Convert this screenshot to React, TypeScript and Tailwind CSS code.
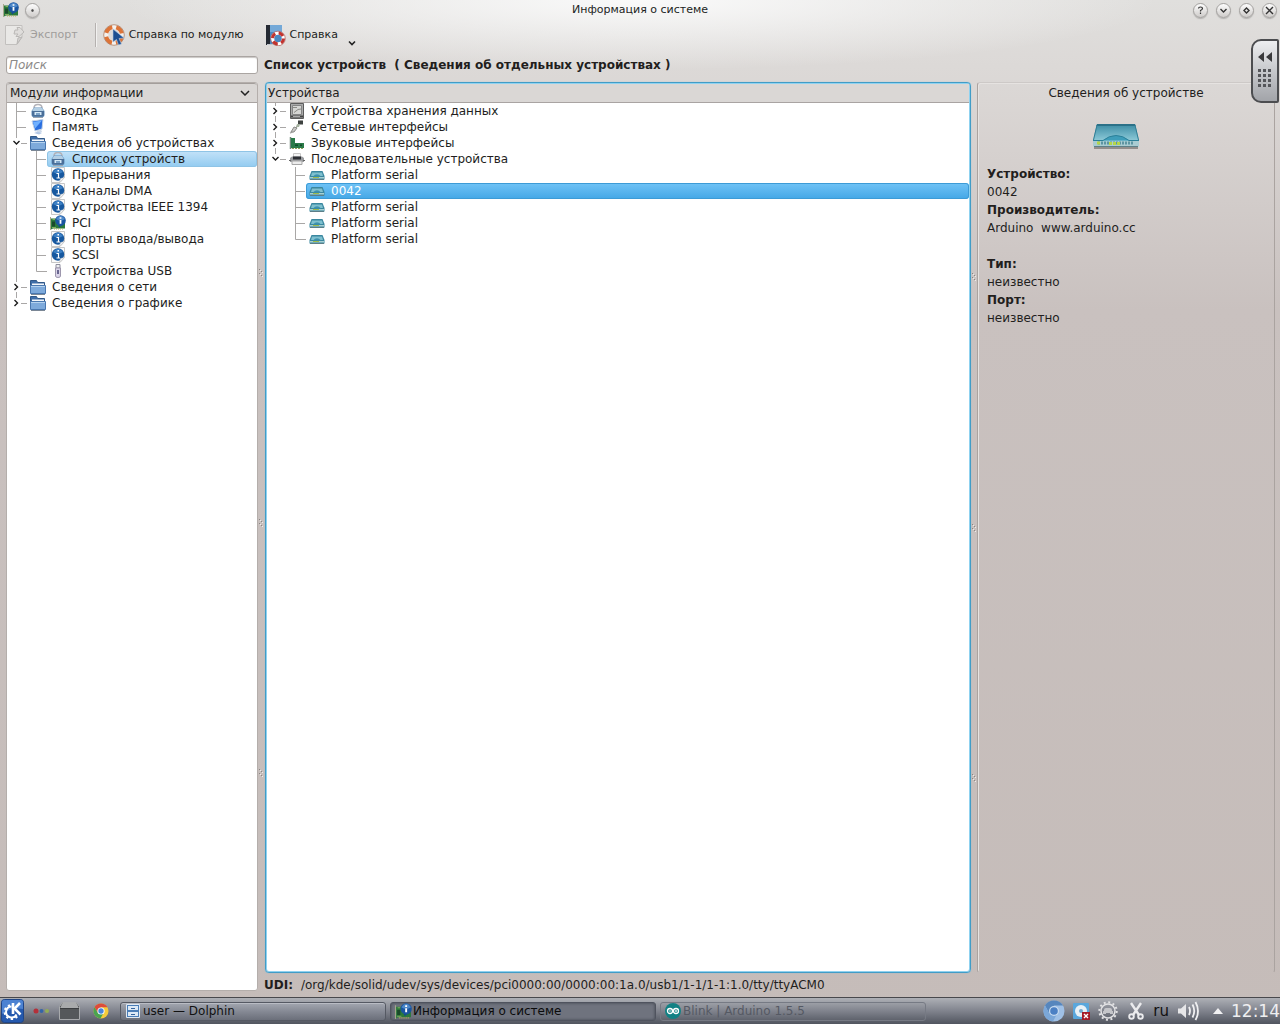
import type { ReactNode } from 'react';

type IconName =
  | 'drive' | 'monitor' | 'folder' | 'info' | 'pci' | 'usb'
  | 'disk' | 'network' | 'card' | 'printer' | 'modem';

type Row = { guides: string; icon: IconName; label: string; selected?: boolean };

/* guide letters: | line, t tee, l corner, c closed, e closed at the end,
   o open (line continues), p open at the end, _ blank */
const modules: Row[] = [
  { guides: 't', icon: 'drive', label: 'Сводка' },
  { guides: 't', icon: 'monitor', label: 'Память' },
  { guides: 'o', icon: 'folder', label: 'Сведения об устройствах' },
  { guides: '|t', icon: 'drive', label: 'Список устройств', selected: true },
  { guides: '|t', icon: 'info', label: 'Прерывания' },
  { guides: '|t', icon: 'info', label: 'Каналы DMA' },
  { guides: '|t', icon: 'info', label: 'Устройства IEEE 1394' },
  { guides: '|t', icon: 'pci', label: 'PCI' },
  { guides: '|t', icon: 'info', label: 'Порты ввода/вывода' },
  { guides: '|t', icon: 'info', label: 'SCSI' },
  { guides: '|l', icon: 'usb', label: 'Устройства USB' },
  { guides: 'c', icon: 'folder', label: 'Сведения о сети' },
  { guides: 'e', icon: 'folder', label: 'Сведения о графике' },
];

const devices: Row[] = [
  { guides: 'c', icon: 'disk', label: 'Устройства хранения данных' },
  { guides: 'c', icon: 'network', label: 'Сетевые интерфейсы' },
  { guides: 'c', icon: 'card', label: 'Звуковые интерфейсы' },
  { guides: 'p', icon: 'printer', label: 'Последовательные устройства' },
  { guides: '_t', icon: 'modem', label: 'Platform serial' },
  { guides: '_t', icon: 'modem', label: '0042', selected: true },
  { guides: '_t', icon: 'modem', label: 'Platform serial' },
  { guides: '_t', icon: 'modem', label: 'Platform serial' },
  { guides: '_l', icon: 'modem', label: 'Platform serial' },
];

const guidePaths: Record<string, string> = {
  '|': 'M9.5 0V16',
  t: 'M9.5 0V16M9.5 8.5H19',
  l: 'M9.5 0V8.5H20',
  c: 'M9.5 0V3M9.5 13V16M14 8.5H20',
  e: 'M9.5 0V3M14 8.5H20',
  o: 'M9.5 0V3M9.5 13V16M14 8.5H20',
  p: 'M9.5 0V3M14 8.5H20',
  _: '',
};

function Guide({ kind }: { kind: string }) {
  const closed = kind === 'c' || kind === 'e';
  const open = kind === 'o' || kind === 'p';
  return (
    <svg className="h-4 w-5 shrink-0" viewBox="0 0 20 16" fill="none" aria-hidden="true">
      <path d={guidePaths[kind]} stroke="#a9a7a6" />
      {closed && <path d="M7.5 5L10.5 8L7.5 11" stroke="#1c1c1c" strokeWidth="1.4" />}
      {open && <path d="M6.5 6L9.5 9L12.5 6" stroke="#1c1c1c" strokeWidth="1.4" />}
    </svg>
  );
}

function Svg({ children, className = 'size-4' }: { children: ReactNode; className?: string }) {
  return (
    <svg className={`${className} shrink-0`} viewBox="0 0 16 16" fill="none" aria-hidden="true">
      {children}
    </svg>
  );
}

function PciArt() {
  return (
    <>
      <path d="M1 3.500H15V13.500H3L1 14.500Z" fill="#2b7a3c" />
      <path d="M.5 2V15" stroke="#a5a88c" />
      <path d="M2 6.500H5V11.500H2Z" fill="#1a4a2a" />
      <path d="M2.500 4.500H5M2 12.500H6" stroke="#7fae5c" />
      <path d="M4 14H13" stroke="#b9ad55" strokeDasharray="1 1" />
      <path d="M8 9L9 12.500L13 9.500Z" fill="#164a8a" />
      <circle cx="10.500" cy="5.500" r="5.300" fill="#1a55a0" />
      <path d="M6 4Q10.500 -2.500 15 4Q10.500 7 6 4" fill="#4d88c9" />
      <path d="M10.500 5V8.800M10.500 2.200V3.800" stroke="#fff" strokeWidth="1.800" />
    </>
  );
}

function Icon({ name }: { name: IconName }) {
  switch (name) {
    case 'drive':
      return (
        <Svg>
          <path d="M4 5Q4 1.500 8 1.500T12 5" stroke="#b3b2b8" strokeWidth="1.500" />
          <path d="M4 4.500H12L14.500 8V12Q14.500 14 12.500 14H3.500Q1.500 14 1.500 12V8Z" fill="#6392bf" />
          <path d="M4 5H12L13.800 8H2.200Z" fill="#b4cfe4" />
          <path d="M2 8H14V12Q14 13.500 12.500 13.500H3.500Q2 13.500 2 12Z" fill="#4a6f99" />
          <path d="M4.500 9H11.500V12H4.500Z" fill="#d5e9f6" />
          <path d="M6 10H10V12H6Z" fill="#7ca3c8" />
          <path d="M3 14.500H13" stroke="#99a4b0" />
        </Svg>
      );
    case 'monitor':
      return (
        <Svg>
          <path d="M2 2L13 .5L12 10L5 12Z" fill="#2a6fe0" stroke="#c5d3e6" />
          <path d="M3 3L12 1.500L5 9.500Z" fill="#6fb0ff" />
          <path d="M7 11.500L11 10.500L12 13L6 14Z" fill="#cdd9e8" />
          <path d="M4 14Q8 12 12 14L9 15.500Z" fill="#b3c7e4" />
        </Svg>
      );
    case 'folder':
      return (
        <Svg>
          <path d="M.5 1.500H6.500L7.500 3.500H14.500V7H.5Z" fill="#3f6ea8" stroke="#315888" />
          <path d="M2 4.500H14V7H2Z" fill="#f4f7fa" />
          <path d="M.5 6.500H15.500V14.500H.5Z" fill="#7eaadb" stroke="#4a78b0" />
          <path d="M1 7.500H15" stroke="#b4d2ef" />
          <path d="M1 15.500H15" stroke="#7b8795" />
        </Svg>
      );
    case 'info':
      return (
        <Svg>
          <path d="M1.500 .5H14.500V10.500L10 15.500H1.500Z" fill="#fbfbfb" stroke="#c7c7c7" />
          <circle cx="8" cy="7.500" r="6.200" fill="#17589f" />
          <path d="M3 5Q8 -2 13 5Q8 8 3 5" fill="#3d80c4" />
          <path d="M6.500 6.500H8.500V11M6.500 11H10" stroke="#fff" strokeWidth="1.200" />
          <path d="M7.500 3H9V4.500H7.500Z" fill="#fff" />
          <path d="M9.500 15.300L10.500 11.500L14.300 10.500Z" fill="#fff" stroke="#bbb" strokeWidth=".5" />
        </Svg>
      );
    case 'pci':
      return <Svg><PciArt /></Svg>;
    case 'usb':
      return (
        <Svg>
          <path d="M6 1.500H10V5H6Z" fill="#eeeef2" stroke="#8e8e9e" />
          <path d="M5.500 5H10.500V13Q10.500 14.500 8 14.500T5.500 13Z" fill="#d9d3e8" stroke="#9d97ad" />
          <path d="M7 7H9V11H7Z" fill="#6a6790" />
        </Svg>
      );
    case 'disk':
      return (
        <Svg>
          <path d="M1.500 .5H14.500V15.500H1.500Z" fill="#aaa" stroke="#5c5c5c" />
          <path d="M3.500 2.500H12.500V11.500H3.500Z" fill="#d6d6d4" stroke="#858585" />
          <path d="M4 4.500H8M5 9.500L9 6.500L12 6" stroke="#8b8b86" />
          <path d="M2 13.500H14" stroke="#444" strokeWidth="2" />
          <path d="M4 13.500H11" stroke="#aaa" />
        </Svg>
      );
    case 'network':
      return (
        <Svg>
          <path d="M1 14Q5 13 9 6" stroke="#b2b2b0" strokeWidth="1.500" />
          <path d="M2 13L5 8L8 9L5 13Z" fill="#c9c9c6" stroke="#8b8b89" />
          <path d="M9 1.500H14V5.500H9Z" fill="#3e4240" />
          <path d="M8 5L7 8L10 8L11 5.500Z" fill="#a4b19e" />
          <path d="M9.500 1.500H13" stroke="#999" />
        </Svg>
      );
    case 'card':
      return (
        <Svg>
          <path d="M1.500 2V14" stroke="#71877a" strokeWidth="1.500" />
          <path d="M2 3H6V8H15V13H2Z" fill="#2a7a48" />
          <path d="M6 9.500H9V11H6ZM11 9.500H13V11H11Z" fill="#124b28" />
          <path d="M3 13.500H14" stroke="#8f9f57" strokeDasharray="2 1" />
        </Svg>
      );
    case 'printer':
      return (
        <Svg>
          <path d="M4.500 2.500H11.500V7H4.500Z" fill="#f4f4f4" stroke="#c6c6c6" />
          <path d="M1 7L3 5.500H13L15 7V11H1Z" fill="#9a9c9f" />
          <path d="M4 5.500H12V8.500H4Z" fill="#2c2f34" />
          <path d="M3 10H13V13.500H3Z" fill="#ececec" stroke="#a6a6a6" />
          <path d="M0 9.500H2M14 9.500H16" stroke="#636363" />
        </Svg>
      );
    case 'modem':
      return (
        <Svg>
          <path d="M2.500 4H13.500L15.500 9V12.500H.5V9Z" fill="#3a879f" />
          <path d="M3 5.500H13L14 9H2Z" fill="#7fc0cf" />
          <path d="M4 9.500Q8 5 12 9.500Z" fill="#3d91ae" />
          <path d="M1 10H15V11.500H1Z" fill="#a8cfd2" />
          <path d="M4 10.500H10" stroke="#9fbb4c" />
          <path d="M1 12.500H15" stroke="#5c7e88" />
        </Svg>
      );
  }
}

function Tree({ rows, label, strong }: { rows: Row[]; label: string; strong?: boolean }) {
  return (
    <ul aria-label={label}>
      {rows.map((row, i) => {
        const look = !row.selected
          ? ''
          : strong
            ? 'rounded-[3px] bg-linear-to-b from-[#70c3f6] to-[#43a7e6] text-white outline -outline-offset-1 outline-[#3d9bd6]'
            : 'rounded-[3px] bg-linear-to-b from-[#c3e2f8] to-[#92cbf0] outline -outline-offset-1 outline-[#8fc4e6]';
        return (
          <li key={i} className="flex h-4">
            {row.guides.split('').map((g, j) => <Guide key={j} kind={g} />)}
            <button type="button" className={`flex h-4 min-w-0 flex-1 items-center gap-1.5 pl-[3px] text-left whitespace-nowrap ${look}`}>
              <Icon name={row.icon} />
              {row.label}
            </button>
          </li>
        );
      })}
    </ul>
  );
}

function RoundButton({ label, children }: { label: string; children: ReactNode }) {
  return (
    <button type="button" aria-label={label} className="grid size-[15px] place-items-center rounded-full border border-[#a3a19f] bg-linear-to-b from-[#fdfdfd] to-[#cfccca] shadow-[0_1px_1px_#88868480]">
      <svg className="size-[11px]" viewBox="0 0 11 11" fill="none" stroke="#333" strokeWidth="1.400" aria-hidden="true">{children}</svg>
    </button>
  );
}

function Splitter({ className }: { className: string }) {
  return (
    <div className={`flex w-1.5 shrink-0 flex-col items-center justify-between ${className}`} aria-hidden="true">
      {[0, 1, 2].map((n) => (
        <svg key={n} className="h-2 w-1" viewBox="0 0 4 8">
          <path d="M0 0h1v1H0zM2 2h1v1H2zM0 4h1v1H0zM2 6h1v1H2z" fill="#8c8684" />
          <path d="M1 1h1v1H1zM3 3h1v1H3zM1 5h1v1H1zM3 7h1v1H3z" fill="#eeeae8" />
        </svg>
      ))}
    </div>
  );
}

function BigModem() {
  return (
    <svg className="h-[27px] w-12" viewBox="0 0 48 27" fill="none" aria-hidden="true">
      <defs>
        <linearGradient id="top" x1="0" y1="0" x2="0" y2="1">
          <stop stopColor="#3a8ba3" /><stop offset=".6" stopColor="#7fbfcf" /><stop offset="1" stopColor="#b4dce2" />
        </linearGradient>
      </defs>
      <path d="M2 23H46V26H2Z" fill="#66605e" opacity=".6" />
      <path d="M5 1H43L47 17V23Q47 24 46 24H2Q1 24 1 23V17Z" fill="url(#top)" />
      <path d="M5 1H43L43.500 3H4.500Z" fill="#2b7188" />
      <path d="M5 2L1.500 17M43 2L46.500 17" stroke="#317e95" />
      <path d="M11 17.500Q17 12.500 24 12.500T37 17.500Z" fill="#3e9db9" />
      <path d="M1 17.500H11Q17 12.500 24 12.500T37 17.500H47" stroke="#2b8099" />
      <path d="M1 18H47V23H1Z" fill="#a9ccd2" />
      <path d="M6 20H42" stroke="#5d95a2" strokeWidth="3" strokeDasharray="2 1" />
      <path d="M5 20H9M17 20.500H28" stroke="#b5d648" strokeWidth="3" strokeDasharray="3 1" />
      <path d="M2 23.500H46" stroke="#5d8088" />
    </svg>
  );
}

function InfoPair({ name, value }: { name: string; value: string }) {
  return (
    <>
      <dt className="leading-[18px] font-bold">{name}</dt>
      <dd className="leading-[18px] whitespace-pre">{value}</dd>
    </>
  );
}

function Task({ children, look }: { children: ReactNode; look: string }) {
  return (
    <button type="button" className={`flex h-[19px] w-[266px] min-w-0 items-center rounded-[3px] border px-1 text-left text-[12px] whitespace-nowrap ${look}`}>
      {children}
    </button>
  );
}

function Taskbar() {
  return (
    <footer className="flex h-[27px] shrink-0 items-center border-t border-[#48484c] bg-linear-to-b from-[#aeb0b6] via-[#80838d] to-[#51555f]">
      <button type="button" aria-label="Меню">
        <svg className="h-6 w-[25px]" viewBox="0 0 25 24" fill="none" aria-hidden="true">
          <rect x="1.500" y=".5" width="22" height="23" rx="3" fill="#2559ae" stroke="#1f4588" />
          <path d="M2 3Q2 1 4 1H21Q23 1 23 3V10Q12 8 2 15Z" fill="#4c82d2" />
          <path d="M11.500 7.500A5.500 5.500 0 1 0 16.500 15.500" stroke="#fff" strokeWidth="2" />
          <path d="M10 6.200A7 7 0 1 0 18 16" stroke="#fff" strokeWidth="2.200" strokeDasharray="2.200 2.600" />
          <path d="M13 4V15" stroke="#fff" strokeWidth="2.600" />
          <path d="M20 4L14.500 9.500L20.500 15.500" stroke="#fff" strokeWidth="2.600" />
        </svg>
      </button>
      <svg className="ml-2 h-2 w-4" viewBox="0 0 16 8" aria-hidden="true">
        <circle cx="3" cy="4" r="2.500" fill="#b3303a" /><circle cx="8.500" cy="4" r="2" fill="#3465a8" /><circle cx="14" cy="4" r="2" fill="#93ad55" />
      </svg>
      <button type="button" aria-label="Рабочий стол" className="ml-[10px]">
        <svg className="h-[18px] w-[21px]" viewBox="0 0 21 18" aria-hidden="true">
          <path d="M3.500 .5H17.500L20.500 4.500V17.500H.5V4.500Z" fill="#55585a" stroke="#a8aaac" />
          <path d="M3.500 1H17.500L20 6.500H1Z" fill="#a9abac" />
          <path d="M1 6.500H20" stroke="#3b3e40" />
        </svg>
      </button>
      <button type="button" aria-label="Chrome" className="ml-3">
        <svg className="size-[18px]" viewBox="0 0 18 18" aria-hidden="true">
          <circle cx="9" cy="9" r="7.500" fill="#f4cb3b" />
          <path d="M2.500 5.200A7.500 7.500 0 0 1 15.500 5.200H9L6 11Z" fill="#dc4b3c" />
          <path d="M2.500 5.200A7.500 7.500 0 0 0 8.500 16.500L11.500 11L6 11Z" fill="#4aa350" />
          <circle cx="9" cy="9" r="3.600" fill="#fff" /><circle cx="9" cy="9" r="2.700" fill="#4a86dc" />
        </svg>
      </button>
      <div className="ml-[10px] flex min-w-0 gap-1">
        <Task look="gap-0.5 border-[#555963] bg-linear-to-b from-[#a3a7b0] via-[#858994] to-[#6b6f7a] text-[#111] shadow-[inset_0_1px_0_#b9bcc4]">
          <Svg>
            <path d="M1.500 1.500H14.500V14.500H1.500Z" fill="#4b7eb8" stroke="#e0e9f2" />
            <path d="M3 3H13V7H3ZM3 9H13V13H3Z" fill="#dce9f6" />
            <path d="M6 5.500H10M6 11.500H10" stroke="#35639c" />
          </Svg>
          user — Dolphin
        </Task>
        <Task look="gap-px border-[#4f535e] bg-[#6f737e] text-[#0b0b0b] shadow-[inset_0_0_3px_#3f434d]">
          <Svg className="size-[17px]"><PciArt /></Svg>
          Информация о системе
        </Task>
        <Task look="gap-0.5 border-[#767a84] bg-transparent text-[#555963]">
          <Svg>
            <circle cx="8" cy="8" r="8" fill="#128184" />
            <circle cx="5" cy="8" r="2.500" stroke="#fff" strokeWidth="1.300" /><circle cx="11" cy="8" r="2.500" stroke="#fff" strokeWidth="1.300" />
            <path d="M4 8H6M10 8H12M11 7V9" stroke="#fff" strokeWidth=".8" />
          </Svg>
          Blink | Arduino 1.5.5
        </Task>
      </div>
      <div className="ml-auto flex shrink-0 items-center">
        <svg className="size-[22px]" viewBox="0 0 22 22" aria-hidden="true">
          <circle cx="11" cy="11" r="10.500" fill="#9fc0e6" />
          <path d="M2 5.500A10.500 10.500 0 0 1 20 5.500H11L6 13Z" fill="#5686bd" />
          <path d="M2 5.500A10.500 10.500 0 0 0 10 21.500L14 14L6 13Z" fill="#7ba7d8" />
          <circle cx="11" cy="11" r="5" fill="#c8dbf0" /><circle cx="11" cy="11" r="3.800" fill="#4b80c4" />
        </svg>
        <svg className="ml-2 size-[17px]" viewBox="0 0 17 17" fill="none" aria-hidden="true">
          <rect width="16" height="16" rx="1" fill="#5aa7dc" />
          <circle cx="8" cy="8" r="6" fill="#e9f1f6" /><circle cx="8" cy="8" r="2" fill="#73aace" />
          <path d="M9 9H17V17H9Z" fill="#a51c27" /><path d="M11 11L15 15M15 11L11 15" stroke="#fff" strokeWidth="1.400" />
        </svg>
        <svg className="ml-2 size-5" viewBox="0 0 20 20" fill="none" aria-hidden="true">
          <circle cx="10" cy="10" r="7" stroke="#e2e2e4" strokeWidth="1.500" />
          <circle cx="10" cy="10" r="8.700" stroke="#e2e2e4" strokeWidth="2" strokeDasharray="2 2.550" />
          <path d="M6 10V9Q6 7 8 7H12Q14 7 14 9V10H15V13H12V12H8V13H5V10Z" fill="#c4c5c9" />
        </svg>
        <svg className="ml-[10px] h-5 w-4" viewBox="0 0 16 20" fill="none" stroke="#ebebed" aria-hidden="true">
          <path d="M3 2L11 14M13 2L5 14" strokeWidth="2.400" />
          <circle cx="3.500" cy="15.500" r="2.300" strokeWidth="1.900" /><circle cx="12.500" cy="15.500" r="2.300" strokeWidth="1.900" />
        </svg>
        <span className="ml-[9px] text-[15px] text-[#111]">ru</span>
        <svg className="ml-2 h-[22px] w-6" viewBox="0 0 24 22" fill="none" stroke="#efeff1" strokeWidth="1.800" aria-hidden="true">
          <path d="M1 8.500H4L9 4V18L4 13.500H1Z" fill="#e6e6e8" stroke="none" />
          <path d="M12 7Q14 11 12 15M15.500 4.500Q19 11 15.500 17.500M18.500 2Q23.500 11 18.500 20" />
        </svg>
        <svg className="ml-3 h-1.5 w-2.5" viewBox="0 0 10 6" aria-hidden="true"><path d="M5 0L10 6H0Z" fill="#f1f1f3" /></svg>
        <time className="ml-2 text-[17px] text-[#eeeef0]">12:14</time>
      </div>
    </footer>
  );
}

export default function App() {
  return (
    <div className="flex h-screen flex-col overflow-hidden bg-[radial-gradient(ellipse_520px_70px_at_50%_0,#fafafa,transparent),linear-gradient(#e0dfdd_0,#dad6d4_100px,#c9c1bf_310px,#c5bcb9_100%)] font-['DejaVu_Sans',sans-serif] text-[12px] leading-4 text-[#221e1d]">
      <header className="grid h-5 shrink-0 grid-cols-[1fr_auto_1fr] items-center px-[3px]">
        <div className="flex items-center gap-1.5">
          <Svg><PciArt /></Svg>
          <RoundButton label="Закрепить"><circle cx="5.500" cy="5.500" r=".5" /></RoundButton>
        </div>
        <h1 className="text-[11px]">Информация о системе</h1>
        <div className="flex justify-end gap-2">
          <RoundButton label="Подсказка"><path strokeWidth="1.200" d="M3.500 3.500Q3.500 2 5.500 2T7.500 3.500Q7.500 4.500 5.500 5.500V6.500M5.500 7.500V9" /></RoundButton>
          <RoundButton label="Свернуть"><path d="M2.500 4L5.500 7L8.500 4" /></RoundButton>
          <RoundButton label="Развернуть"><path d="M5.500 3L8 5.500L5.500 8L3 5.500Z" /></RoundButton>
          <RoundButton label="Закрыть"><path d="M2 2L9 9M9 2L2 9" /></RoundButton>
        </div>
      </header>

      <nav className="flex h-8 shrink-0 items-center pb-0.5 text-[11px]" aria-label="Панель инструментов">
        <button type="button" disabled className="ml-1 flex items-center gap-1 text-[#a09d9b]">
          <svg className="size-[22px]" viewBox="0 0 22 22" fill="none" aria-hidden="true">
            <path d="M1.500 1.500H18V13L13 20.500H1.500Z" fill="#e9e8e6" stroke="#c2c0be" />
            <path d="M13 20L14 14L18 13Z" fill="#d5d3d1" stroke="#b9b7b5" />
            <path d="M11 6H14L13 3.500H16L20 8L15 12.500H12L14 10H10Z" fill="#dfdddb" stroke="#bab8b6" />
          </svg>
          Экспорт
        </button>
        <div className="ml-[17px] h-6 w-px bg-[#b5b1af] shadow-[1px_0_0_#f2f1f0]" />
        <button type="button" className="ml-[7px] flex items-center gap-1">
          <svg className="size-[22px]" viewBox="0 0 22 22" fill="none" aria-hidden="true">
            <circle cx="11" cy="11" r="8" stroke="#f4f1ee" strokeWidth="4.500" />
            <circle cx="11" cy="11" r="8" stroke="#dd7438" strokeWidth="4" strokeDasharray="8.570 4" strokeDashoffset="-2" />
            <circle cx="11" cy="11" r="10.300" stroke="#aa7455" strokeWidth=".7" />
            <path d="M10 5L21 14L16 14.500L18.500 20L15.500 21L13.500 15.500L10 18Z" fill="#1d4f91" stroke="#b7cce6" strokeWidth=".6" />
          </svg>
          Справка по модулю
        </button>
        <button type="button" className="ml-5 flex items-center gap-1">
          <svg className="size-[22px]" viewBox="0 0 22 22" fill="none" aria-hidden="true">
            <path d="M2 1H18V20H2Z" fill="#4b88c1" /><path d="M2 1H6V21H2Z" fill="#252a33" /><path d="M6 1H18V8H6Z" fill="#74a9d8" />
            <path d="M3 20.500H14" stroke="#c3c8cf" />
            <circle cx="14" cy="14.500" r="5.500" stroke="#fff" strokeWidth="3.500" />
            <circle cx="14" cy="14.500" r="5.500" stroke="#c2332e" strokeWidth="3" strokeDasharray="5.140 3.500" />
            <circle cx="14" cy="14.500" r="7.300" stroke="#a6413c" strokeWidth=".6" />
          </svg>
          Справка
          <svg className="mt-4 ml-1.5 h-1.5 w-2" viewBox="0 0 8 6" fill="none" aria-hidden="true"><path d="M1 1.500L4 4.500L7 1.500" stroke="#222" strokeWidth="1.600" /></svg>
        </button>
      </nav>

      <main className="flex min-h-0 flex-1 pr-[5px] pl-1.5">
        <aside className="flex w-[252px] shrink-0 flex-col pb-1.5">
          <input type="text" aria-label="Поиск" placeholder="Поиск" className="mt-1 h-[18px] w-full rounded-[3px] border border-[#aaa5a2] bg-white px-0.5 text-[12px] italic shadow-[inset_0_1px_1px_#c9c6c4] outline-none placeholder:text-[#8c8a89]" />
          <section className="mt-2 flex min-h-0 flex-1 flex-col rounded-[3px] border border-[#b4aeab] bg-white">
            <button type="button" className="flex h-5 shrink-0 items-center justify-between rounded-t-[3px] border-t border-b border-t-[#a39e9b] border-b-[#a9a4a2] bg-[#dad7d5] pr-[7px] pl-[3px]">
              Модули информации
              <svg className="h-1.5 w-2.5" viewBox="0 0 10 6" fill="none" aria-hidden="true"><path d="M1 1L5 5L9 1" stroke="#222" strokeWidth="1.500" /></svg>
            </button>
            <Tree rows={modules} label="Модули информации" />
          </section>
        </aside>
        <Splitter className="pt-[217px] pb-[220px]" />
        <div className="flex min-w-0 flex-1 flex-col">
          <h2 className="mt-1 h-[18px] leading-[18px] font-bold whitespace-pre">Список устройств  ( Сведения об отдельных устройствах )</h2>
          <div className="mt-2 flex min-h-0 flex-1">
            <section className="ml-px flex min-w-0 flex-1 flex-col overflow-hidden rounded-[4px] border border-[#419cc6] bg-white shadow-[inset_0_0_0_1px_#8fd2f0,0_0_1px_#6db6dc]">
              <h3 className="mx-px mt-px h-[19px] shrink-0 border-b border-[#a9a4a2] bg-[#dad7d5] pl-px leading-[18px]">Устройства</h3>
              <div className="pr-px"><Tree rows={devices} label="Устройства" strong /></div>
            </section>
            <Splitter className="pt-[191px] pb-[191px]" />
            <section className="w-[298px] shrink-0 rounded-[3px] border border-t-[#cdc9c7] border-r-[#aaa3a0] border-b-transparent border-l-[#aaa3a0] px-[9px] shadow-[inset_1px_1px_0_#e6e3e1]">
              <h3 className="text-center leading-5">Сведения об устройстве</h3>
              <div className="mt-5 mr-5 flex h-[30px] justify-center"><BigModem /></div>
              <dl className="mt-3">
                <InfoPair name="Устройство:" value="0042" />
                <InfoPair name="Производитель:" value="Arduino  www.arduino.cc" />
                <div className="h-[18px]" />
                <InfoPair name="Тип:" value="неизвестно" />
                <InfoPair name="Порт:" value="неизвестно" />
              </dl>
            </section>
          </div>
          <p className="h-6 shrink-0 leading-6"><b>UDI:</b><span className="ml-2">/org/kde/solid/udev/sys/devices/pci0000:00/0000:00:1a.0/usb1/1-1/1-1:1.0/tty/ttyACM0</span></p>
        </div>
      </main>

      <Taskbar />

      <button type="button" aria-label="Боковая панель" className="absolute top-[39px] right-px h-16 w-7 rounded-l-[10px] rounded-r-[2px] border-2 border-[#4c4d50] bg-linear-to-b from-[#edeef0] to-[#a2a4a9]">
        <svg className="mx-auto h-10 w-4" viewBox="0 0 16 40" aria-hidden="true">
          <path d="M7 1V11L1 6ZM15 1V11L9 6Z" fill="#3a3a3c" />
          {[18, 23, 28, 33].map((y) => [1, 6, 11].map((x) => <rect key={`${x}-${y}`} x={x} y={y} width="3" height="3" fill="#55565a" />))}
        </svg>
      </button>
    </div>
  );
}
